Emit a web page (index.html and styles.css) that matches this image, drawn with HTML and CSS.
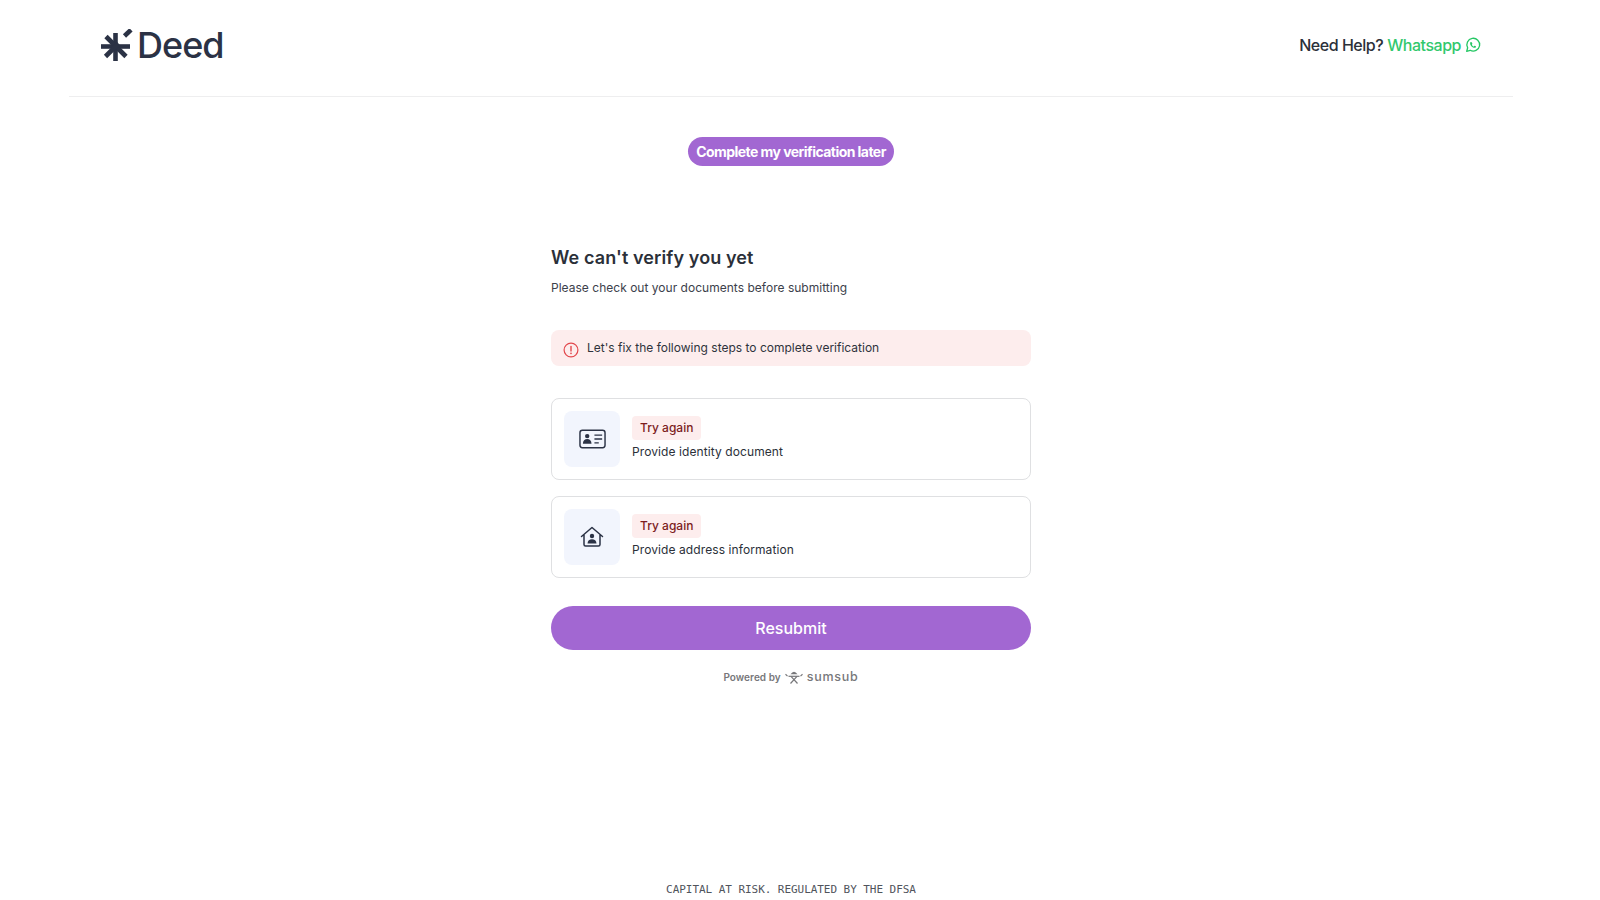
FILE: index.html
```html
<!DOCTYPE html>
<html lang="en">
<head>
    <meta charset="UTF-8">
    <meta name="viewport" content="width=device-width, initial-scale=1.0">
    <title>Deed - Verification</title>
    <link rel="stylesheet" href="styles.css">
</head>
<body>
    <div class="page">
        <header class="header">
            <a class="logo" href="#">
                <svg class="logo-mark" viewBox="0 0 32 32" width="32" height="32">
                    <g stroke="#2b3245" stroke-width="4.6" fill="none">
                        <path d="M0 17.500H29"/>
                        <path d="M14.500 4V32"/>
                        <path d="M5 7.500L25 27.500"/>
                        <path d="M4.500 27.500L17.500 14.500"/>
                        <path d="M23.500 7L30 .8"/>
                    </g>
                </svg>
                <span class="logo-text">Deed</span>
            </a>
            <div class="help">
                Need Help? <span class="help-link">Whatsapp</span>
                <svg class="wa-icon" viewBox="0 0 24 24" width="16" height="16">
                    <path d="M2.500 21.500l1.500-5.300a9.600 9.600 0 1 1 3.700 3.700z" fill="none" stroke="#25c764" stroke-width="2" stroke-linejoin="round"/>
                    <path d="M9 7.600c-.5 0-1.300.7-1.300 2.100 0 2.800 3.600 6.600 6.800 6.600 1.300 0 2.100-.9 2.100-1.600 0-.5-1.900-1.500-2.300-1.400-.4.1-.7 1-1.100 1-.8 0-2.800-1.900-2.900-2.800 0-.4.8-.8.8-1.200 0-.4-.8-2.700-2.100-2.700z" fill="#25c764"/>
                </svg>
            </div>
        </header>

        <div class="later-row">
            <button class="later-btn">Complete my verification later</button>
        </div>

        <main class="panel">
            <h1 class="title">We can't verify you yet</h1>
            <p class="subtitle">Please check out your documents before submitting</p>

            <div class="alert">
                <svg class="alert-icon" viewBox="0 0 16 16" width="16" height="16">
                    <circle cx="8" cy="8" r="6.900" fill="none" stroke="#e2484d" stroke-width="1.200"/>
                    <path d="M8 4.400V9" stroke="#e2484d" stroke-width="1.400" stroke-linecap="round"/>
                    <circle cx="8" cy="11.300" r=".85" fill="#e2484d"/>
                </svg>
                <span>Let's fix the following steps to complete verification</span>
            </div>

            <div class="step">
                <div class="step-icon">
                    <svg viewBox="0 0 28 20" width="27" height="20">
                        <rect x="1" y="1" width="26" height="18" rx="2.500" fill="none" stroke="#2b3245" stroke-width="1.500"/>
                        <circle cx="8.500" cy="7" r="2.300" fill="#2b3245"/>
                        <path d="M4 14.800c0-3 2-4.800 4.500-4.800s4.500 1.800 4.500 4.800z" fill="#2b3245"/>
                        <path d="M16 6h8M16 10h8M16 14h4.500" stroke="#2b3245" stroke-width="1.500"/>
                    </svg>
                </div>
                <div class="step-body">
                    <span class="badge">Try again</span>
                    <span class="step-text">Provide identity document</span>
                </div>
            </div>

            <div class="step">
                <div class="step-icon">
                    <svg viewBox="0 0 24 24" width="24" height="24">
                        <path d="M1.500 11.500L12 2.500l10.500 9M4 10v9.500a1.500 1.500 0 0 0 1.500 1.500h13a1.500 1.500 0 0 0 1.500-1.500V10" fill="none" stroke="#2b3245" stroke-width="1.500" stroke-linejoin="round" stroke-linecap="round"/>
                        <circle cx="12" cy="11" r="2.200" fill="#2b3245"/>
                        <path d="M7.500 18.500c0-2.800 2-4.300 4.500-4.300s4.500 1.500 4.500 4.300z" fill="#2b3245"/>
                    </svg>
                </div>
                <div class="step-body">
                    <span class="badge">Try again</span>
                    <span class="step-text">Provide address information</span>
                </div>
            </div>

            <button class="submit-btn">Resubmit</button>

            <div class="powered">
                <span>Powered by</span>
                <svg class="sumsub-mark" viewBox="0 0 18 14" width="18" height="14">
                    <path d="M5.500 4.200Q9-.8 12.500 4.200z" fill="#77777a"/>
                    <g stroke="#77777a" stroke-width="1.200" fill="none">
                        <path d="M3.500 6.300h11"/>
                        <path d="M12 6.300L5.500 13.500M6 6.300l6.500 7.200"/>
                        <path d="M.5 4.300l2 1.800M17.500 4.300l-2 1.800"/>
                    </g>
                </svg>
                <span class="sumsub-text">sumsub</span>
            </div>
        </main>

        <footer class="footer">CAPITAL AT RISK. REGULATED BY THE DFSA</footer>
    </div>
</body>
</html>
```

FILE: styles.css
```css
* {
    box-sizing: border-box;
}
body {
    font-family: Inter, "Liberation Sans", sans-serif;
    margin: 0;
    background-color: #fff;
    color: #2b3039;
}
.page {
    height: 900px;
    padding: 0 87px 0 69px;
    display: flex;
    flex-direction: column;
    overflow: hidden;
}
.header {
    height: 97px;
    padding: 0 32px 7px 32px;
    border-bottom: 1px solid #eeeeef;
    display: flex;
    align-items: center;
    justify-content: space-between;
}
.logo {
    display: flex;
    align-items: center;
    gap: 4px;
    text-decoration: none;
}
.logo-text {
    font-size: 36px;
    font-weight: 500;
    letter-spacing: -1px;
    color: #2b3245;
}
.help {
    display: flex;
    align-items: center;
    gap: 4px;
    font-size: 16px;
    font-weight: 500;
    letter-spacing: -0.47px;
    color: #2b3039;
}
.help-link {
    color: #32c86d;
}
.later-row {
    display: flex;
    justify-content: center;
    padding-top: 40px;
}
.later-btn {
    height: 29px;
    width: 206px;
    padding: 0;
    border: none;
    border-radius: 15px;
    background: #a267d2;
    color: #fff;
    font-family: inherit;
    font-size: 14px;
    font-weight: 700;
    letter-spacing: -0.55px;
}
.panel {
    width: 480px;
    margin: 0 auto;
    padding-top: 80px;
    display: flex;
    flex-direction: column;
}
.title {
    margin: 0;
    font-size: 18px;
    font-weight: 600;
    line-height: 24px;
    letter-spacing: 0.1px;
    color: #2b3039;
}
.subtitle {
    margin: 9px 0 0;
    font-size: 12px;
    line-height: 18px;
    letter-spacing: 0.02px;
    color: #3c414b;
}
.alert {
    margin-top: 33px;
    height: 36px;
    padding: 0 12px;
    border-radius: 8px;
    background: #fdeded;
    display: flex;
    align-items: center;
    gap: 8px;
    font-size: 12px;
    color: #2f333c;
}
.alert-icon {
    margin-top: 3px;
    flex-shrink: 0;
}
.alert span {
    margin-top: -2px;
}
.step {
    margin-top: 16px;
    height: 82px;
    padding: 0 12px;
    border: 1px solid #dfe0e2;
    border-radius: 8px;
    display: flex;
    align-items: center;
    gap: 12px;
}
.alert + .step {
    margin-top: 32px;
}
.step-icon {
    width: 56px;
    height: 56px;
    border-radius: 8px;
    background: #f2f5fd;
    display: flex;
    align-items: center;
    justify-content: center;
}
.step-body {
    display: flex;
    flex-direction: column;
    align-items: flex-start;
    gap: 3px;
    margin-top: -1px;
}
.badge {
    height: 24px;
    padding: 0 8px;
    border-radius: 4px;
    background: #fdeded;
    color: #7c1d1d;
    font-size: 12px;
    font-weight: 500;
    line-height: 24px;
}
.step-text {
    font-size: 12px;
    line-height: 18px;
    letter-spacing: 0.09px;
    color: #2b3039;
}
.submit-btn {
    margin-top: 28px;
    height: 44px;
    border: none;
    border-radius: 22px;
    background: #a267d2;
    color: #fff;
    font-family: inherit;
    font-size: 16px;
    font-weight: 500;
}
.powered {
    margin-top: 19px;
    display: flex;
    align-items: center;
    justify-content: center;
    gap: 4px;
    font-size: 10px;
    font-weight: 600;
    letter-spacing: 0.05px;
    color: #77777a;
}
.sumsub-text {
    font-size: 12.5px;
    font-weight: 500;
    letter-spacing: 0.75px;
}
.footer {
    margin-top: auto;
    padding-bottom: 4px;
    text-align: center;
    font-family: "DejaVu Sans Mono", monospace;
    font-size: 11px;
    line-height: 13px;
    letter-spacing: -0.05px;
    color: #50545c;
}
```
